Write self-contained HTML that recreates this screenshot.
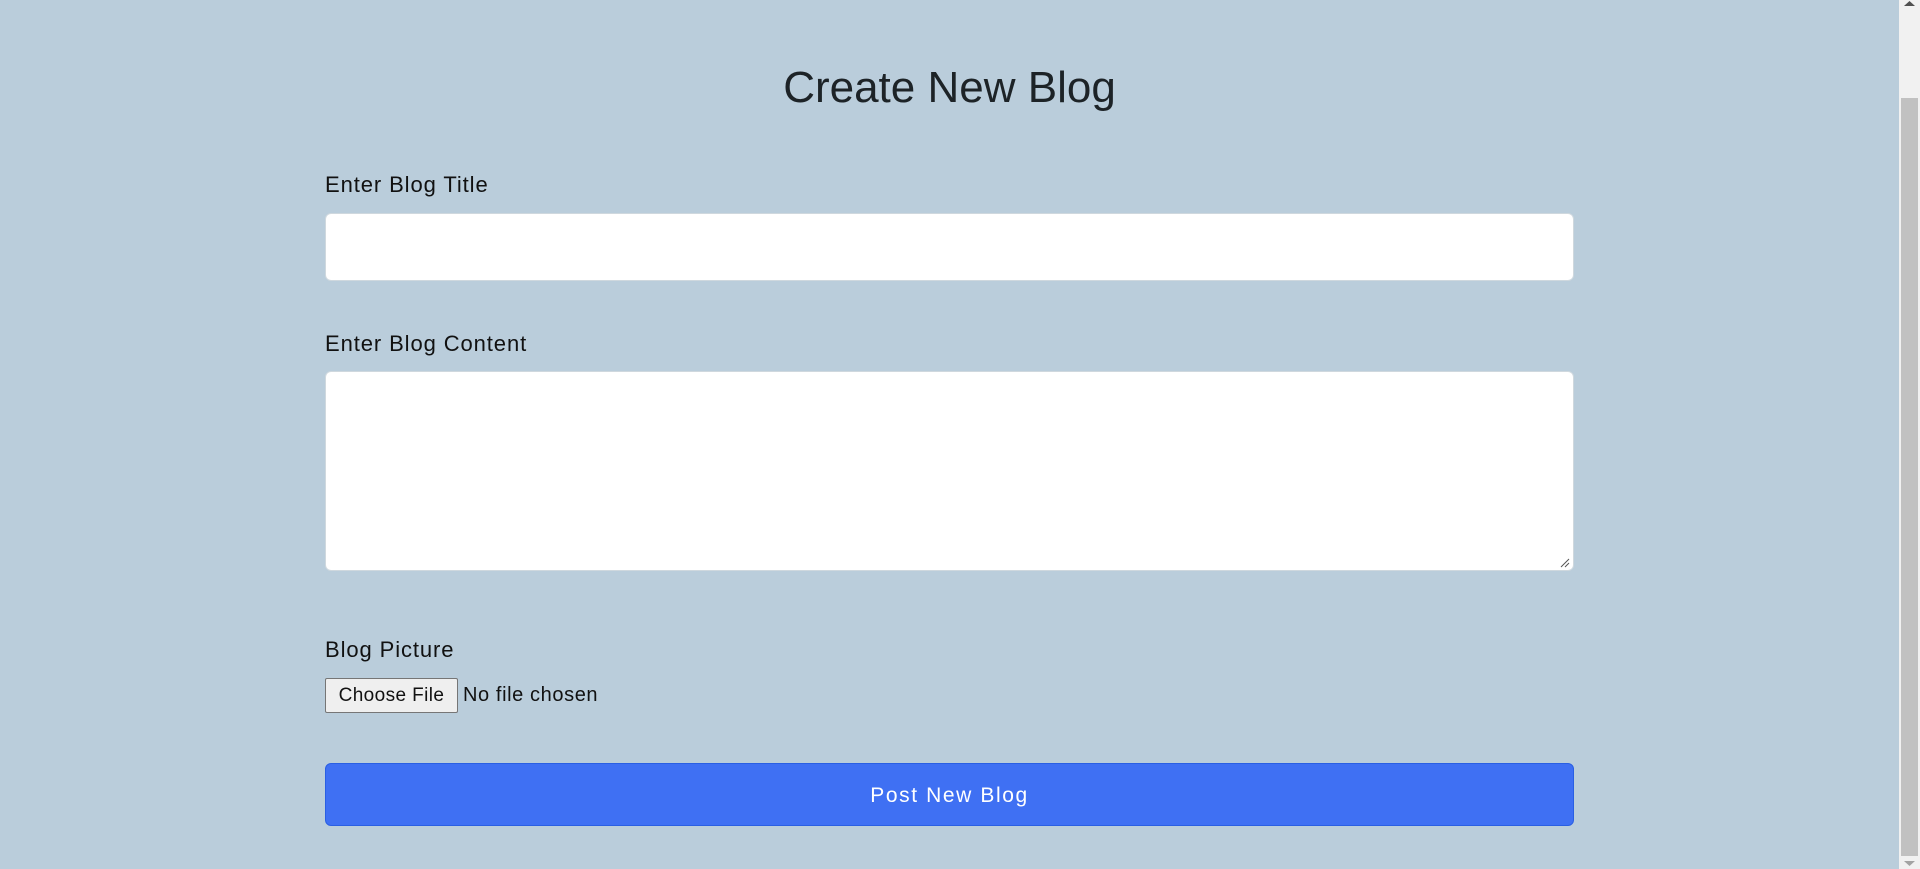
<!DOCTYPE html>
<html><head><meta charset="utf-8"><style>
html,body{margin:0;padding:0;}
body{width:1920px;height:869px;background:#bacddb;font-family:"Liberation Sans",sans-serif;position:relative;overflow:hidden;color:#111;}
.a{position:absolute;}
h1{position:absolute;left:0;width:1899px;top:60px;margin:0;text-align:center;font-weight:400;font-size:44px;color:#1d2327;line-height:56px;}
.lbl{font-size:22px;letter-spacing:0.9px;left:325px;line-height:26px;color:#111;}
.box{left:325px;width:1247px;background:#fff;border:1px solid #cfd8de;border-radius:6px;}
.btn{left:325px;top:763px;width:1247px;height:61px;background:#3f70f3;border:1px solid #2a5fe3;border-radius:6px;color:#fff;font-size:21px;letter-spacing:1.6px;text-align:center;line-height:63px;}
.sb{left:1899px;top:0;width:21px;height:869px;background:#f1f1f1;}
.th{left:1901px;top:98px;width:17px;height:758px;background:#c1c1c1;}
</style></head><body>
<h1>Create New Blog</h1>
<div class="a lbl" style="top:172px">Enter Blog Title</div>
<div class="a box" style="top:213px;height:66px"></div>
<div class="a lbl" style="top:331px">Enter Blog Content</div>
<div class="a box" style="top:371px;height:198px"></div>
<svg class="a" style="left:1560px;top:558px" width="10" height="10"><path d="M1 9L9 1M5 9L9 5" stroke="#555" stroke-width="1"/></svg>
<div class="a lbl" style="top:637px">Blog Picture</div>
<div class="a" style="left:325px;top:678px;width:131px;height:33px;background:#efefef;border:1px solid #767676;border-radius:2px;font-size:19px;letter-spacing:0.4px;line-height:33px;text-align:center;">Choose File</div>
<div class="a" style="left:463px;top:678px;font-size:20px;letter-spacing:0.6px;line-height:35px;">No file chosen</div>
<div class="a btn">Post New Blog</div>
<div class="a sb"></div>
<div class="a th"></div>
<svg class="a" style="left:1904px;top:1px" width="11" height="6"><path d="M0 5L5.5 0L11 5Z" fill="#505050"/></svg>
<svg class="a" style="left:1904px;top:861px" width="11" height="6"><path d="M0 0L5.5 5L11 0Z" fill="#a3a3a3"/></svg>
</body></html>
